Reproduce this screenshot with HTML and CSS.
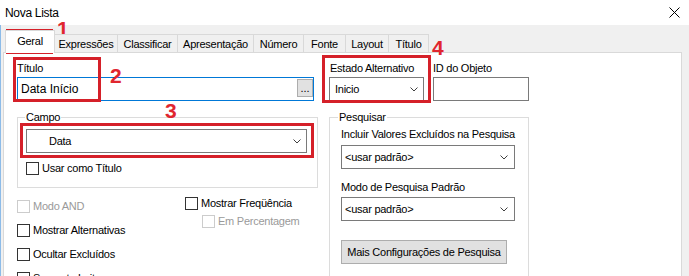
FILE: index.html
```html
<!DOCTYPE html>
<html lang="pt">
<head>
<meta charset="utf-8">
<title>Nova Lista</title>
<link rel="stylesheet" href="styles.css">
</head>
<body>
<div class="titlebar">
  <span class="title">Nova Lista</span>
  <svg class="close" width="11" height="11" viewBox="0 0 11 11"><path d="M0.5 0.5 L10.5 10.5 M10.5 0.5 L0.5 10.5" stroke="#000" stroke-width="1" fill="none"/></svg>
</div>
<div class="window">
  <div class="tabs">
    <div class="tab active">Geral</div>
    <div class="tab">Expressões</div>
    <div class="tab">Classificar</div>
    <div class="tab">Apresentação</div>
    <div class="tab">Número</div>
    <div class="tab">Fonte</div>
    <div class="tab">Layout</div>
    <div class="tab">Título</div>
  </div>
  <div class="panel">
    <div class="col-left">
      <div class="field">
        <div class="lbl">Título</div>
        <div class="input title-input"><span>Data Início</span><span class="dots">...</span></div>
      </div>
      <fieldset class="group campo">
        <legend>Campo</legend>
        <div class="combo combo-campo"><span>Data</span><svg class="chev" width="8" height="5" viewBox="0 0 8 5"><polyline points="0.5,0.5 4,4 7.5,0.5" fill="none" stroke="#404040" stroke-width="1"/></svg></div>
        <div class="check usar"><span class="box"></span>Usar como Título</div>
      </fieldset>
      <div class="options">
        <div class="opt-col opt-left">
          <div class="check row disabled"><span class="box"></span>Modo AND</div>
          <div class="check row"><span class="box"></span>Mostrar Alternativas</div>
          <div class="check row"><span class="box"></span>Ocultar Excluídos</div>
          <div class="check row"><span class="box"></span>Somente Leitura</div>
        </div>
        <div class="opt-col opt-right">
          <div class="check row-s"><span class="box"></span>Mostrar Freqüência</div>
          <div class="check row-s sub disabled"><span class="box"></span>Em Percentagem</div>
        </div>
      </div>
    </div>
    <div class="col-right">
      <div class="top-row">
        <div class="field estado">
          <div class="lbl">Estado Alternativo</div>
          <div class="combo"><span>Inicio</span><svg class="chev" width="8" height="5" viewBox="0 0 8 5"><polyline points="0.5,0.5 4,4 7.5,0.5" fill="none" stroke="#404040" stroke-width="1"/></svg></div>
        </div>
        <div class="field idobj">
          <div class="lbl">ID do Objeto</div>
          <div class="input id-input"></div>
        </div>
      </div>
      <fieldset class="group pesquisar">
        <legend>Pesquisar</legend>
        <div class="lbl p-first">Incluir Valores Excluídos na Pesquisa</div>
        <div class="combo combo-search"><span>&lt;usar padrão&gt;</span><svg class="chev" width="8" height="5" viewBox="0 0 8 5"><polyline points="0.5,0.5 4,4 7.5,0.5" fill="none" stroke="#404040" stroke-width="1"/></svg></div>
        <div class="lbl p-second">Modo de Pesquisa Padrão</div>
        <div class="combo combo-search combo-search2"><span>&lt;usar padrão&gt;</span><svg class="chev" width="8" height="5" viewBox="0 0 8 5"><polyline points="0.5,0.5 4,4 7.5,0.5" fill="none" stroke="#404040" stroke-width="1"/></svg></div>
        <div class="btn">Mais Configurações de Pesquisa</div>
      </fieldset>
    </div>
  </div>
</div>
<div class="mark m1"></div>
<div class="mark m2"></div>
<div class="mark m3"></div>
<div class="mark m4"></div>
<span class="num n1">1</span>
<span class="num n2">2</span>
<span class="num n3">3</span>
<span class="num n4">4</span>
</body>
</html>
```
FILE: styles.css
```css
* { box-sizing: border-box; }

body {
  margin: 0;
  width: 689px;
  height: 276px;
  overflow: hidden;
  position: relative;
  background: #f0f0f0;
  color: #000;
  font-family: "Liberation Sans", Arial, sans-serif;
  font-size: 11px;
  line-height: 14px;
  letter-spacing: -0.25px;
}

.titlebar {
  height: 25px;
  background: #fff;
  display: flex;
  align-items: center;
  justify-content: space-between;
  padding: 0 9px 0 5px;
}
.title { font-size: 12px; letter-spacing: -0.3px; }

.window {
  height: 251px;
  border-left: 1px solid #8cbbe8;
  padding-top: 5px;
}

.tabs {
  display: flex;
  align-items: flex-end;
  height: 22px;
  padding-left: 4px;
  position: relative;
  z-index: 1;
}
.tab {
  height: 18px;
  border: 1px solid #d9d9d9;
  border-bottom: none;
  margin-left: -1px;
  background: #f0f0f0;
  display: flex;
  align-items: center;
  justify-content: center;
}
.tab:nth-child(1) { margin-left: 0; width: 50px; }
.tab:nth-child(2) { width: 64px; }
.tab:nth-child(3) { width: 61px; }
.tab:nth-child(4) { width: 77px; }
.tab:nth-child(5) { width: 51px; }
.tab:nth-child(6) { width: 43px; }
.tab:nth-child(7) { width: 44px; }
.tab:nth-child(8) { width: 41px; }
.tab.active {
  height: 23px;
  margin-bottom: -1px;
  background: #fff;
  position: relative;
  z-index: 2;
  padding-bottom: 3px;
}

.panel {
  margin-left: 2px;
  width: 679px;
  height: 230px;
  background: #fff;
  border: 1px solid #d9d9d9;
  display: flex;
  padding: 8px 0 0 13px;
}

.col-left { width: 301px; flex: none; }
.col-right { width: 200px; margin-left: 11px; flex: none; }

.lbl { height: 14px; white-space: nowrap; }
.field .lbl { margin-bottom: 2px; }

.input {
  height: 24px;
  border: 1px solid #7a7a7a;
  background: #fff;
}
.title-input {
  width: 297px;
  border-color: #0078d7;
  display: flex;
  align-items: center;
  justify-content: space-between;
  padding: 0 0 0 3px;
  font-size: 12px;
  letter-spacing: 0;
}
.dots {
  width: 16px;
  height: 18px;
  align-self: flex-start;
  margin-top: 1px;
  background: #e1e1e1;
  border: 1px solid #adadad;
  font-size: 11px;
  line-height: 11px;
  display: flex;
  align-items: flex-end;
  justify-content: center;
  padding-bottom: 2px;
}

.combo {
  height: 24px;
  border: 1px solid #7a7a7a;
  background: #fff;
  display: flex;
  align-items: center;
  justify-content: space-between;
  padding: 0 5px 0 5px;
}
.chev { flex: none; }

.group {
  margin: 9px 0 0;
  border: 1px solid #dcdcdc;
  min-width: 0;
}
.group legend {
  padding: 0 1px;
  line-height: 14px;
}

.campo {
  width: 301px;
  padding: 0 0 12px 8px;
}
.campo legend { margin-left: -1px; }
.combo-campo {
  width: 281px;
  margin-top: 5px;
  padding-left: 22px;
}

.check {
  display: flex;
  align-items: center;
  white-space: nowrap;
}
.box {
  width: 13px;
  height: 13px;
  border: 1px solid #333;
  background: #fff;
  margin-right: 3px;
  flex: none;
}
.check.disabled { color: #9a9a9a; }
.check.disabled .box { border-color: #cccccc; }
.usar { margin-top: 8px; height: 14px; }

.options {
  display: flex;
  margin-top: 6px;
}
.opt-left { width: 168px; }
.row { height: 24px; }
.row-s { height: 18px; }
.sub { margin-left: 17px; }

.top-row { display: flex; }
.estado { width: 95px; }
.estado .lbl { padding-left: 1px; }
.idobj { width: 96px; margin-left: 9px; }

.pesquisar {
  width: 200px;
  padding: 0 0 30px 11px;
}
.pesquisar legend { margin-left: -3px; }
.p-first { margin-top: 3px; }
.combo-search {
  width: 174px;
  margin-top: 4px;
  padding-left: 3px;
  padding-right: 6px;
}
.p-second { margin-top: 11px; }
.combo-search2 { margin-top: 3px; }
.btn {
  width: 166px;
  height: 24px;
  margin-top: 19px;
  background: #e1e1e1;
  border: 1px solid #adadad;
  display: flex;
  align-items: center;
  justify-content: center;
  white-space: nowrap;
}

.mark {
  position: absolute;
  border: 3px solid #d52029;
}
.m1 { left: 6px; top: 29px; width: 47px; height: 25px; }
.m2 { left: 13px; top: 57px; width: 88px; height: 45px; }
.m3 { left: 20px; top: 123px; width: 294px; height: 35px; }
.m4 { left: 322px; top: 55px; width: 109px; height: 48px; }

.num {
  position: absolute;
  font-family: "Liberation Sans", Arial, sans-serif;
  font-weight: bold;
  font-size: 21px;
  line-height: 21px;
  letter-spacing: 0;
  color: #e0262f;
}
.n1 { left: 57px; top: 18px; }
.n2 { left: 110px; top: 65px; }
.n3 { left: 165px; top: 100px; }
.n4 { left: 432px; top: 37px; }
```
